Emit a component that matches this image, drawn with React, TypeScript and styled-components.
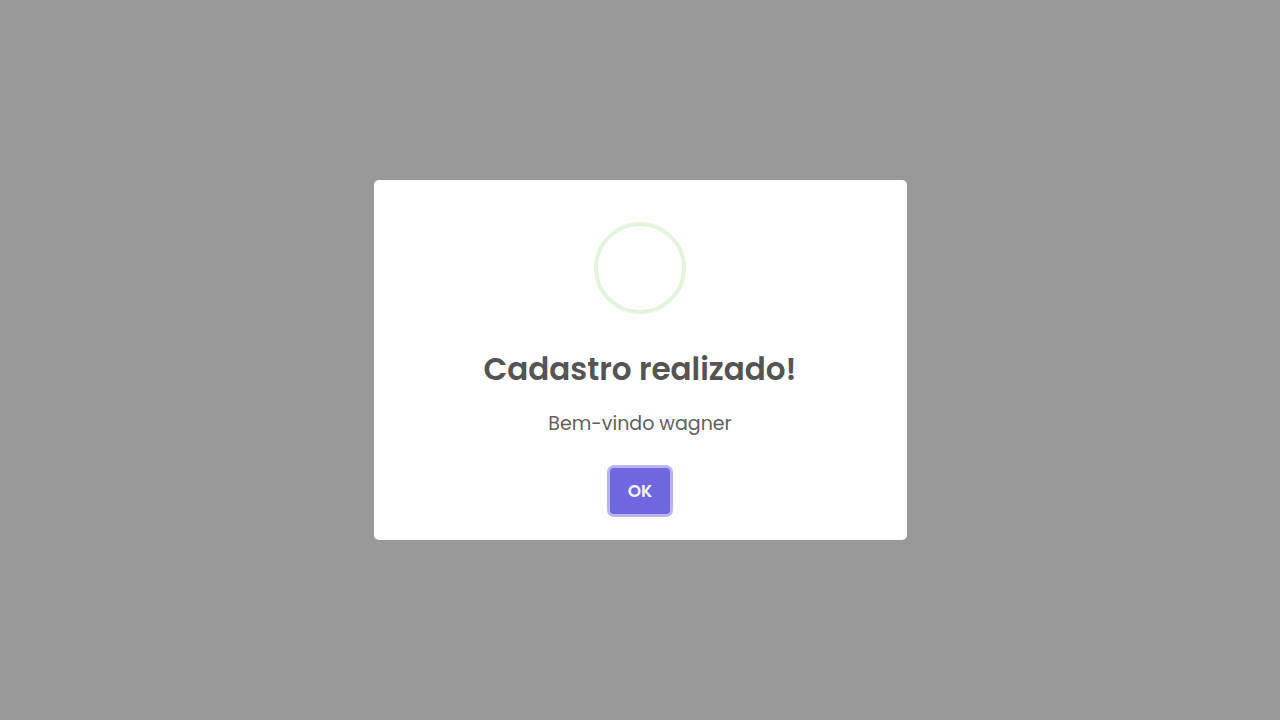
import React from "react";
import styled, { createGlobalStyle } from "styled-components";

const GlobalStyle = createGlobalStyle`
  *, *::before, *::after { box-sizing: border-box; }
  body {
    margin: 0;
    background: #999999;
    font-family: Poppins, Inter, "Liberation Sans", sans-serif;
  }
`;

const Backdrop = styled.main`
  min-height: 100vh;
  display: flex;
  align-items: center;
  justify-content: center;
  padding: 10px;
`;

const Dialog = styled.section`
  width: 100%;
  max-width: 533px;
  display: flex;
  flex-direction: column;
  align-items: center;
  padding: 42px 20px 26px;
  border-radius: 5px;
  background: #ffffff;
  text-align: center;
`;

const SuccessRing = styled.div`
  width: 92px;
  height: 92px;
  border: 4px solid #e3f4da;
  border-radius: 50%;
`;

const Title = styled.h2`
  margin: 32px 0 0;
  color: #545454;
  font-size: 31px;
  font-weight: 600;
  line-height: 46px;
`;

const Message = styled.p`
  margin: 18px 0 0;
  color: #606060;
  font-size: 19px;
  font-weight: 400;
  line-height: 28px;
`;

const ConfirmButton = styled.button`
  min-width: 60px;
  margin: 30px 0 0;
  padding: 11px 16px;
  border: 0;
  border-radius: 4px;
  background: #7066e0;
  box-shadow: 0 0 0 3px #b8b3f0;
  color: #f4f2fd;
  font-family: inherit;
  font-size: 17px;
  font-weight: 600;
  line-height: 24px;
  cursor: pointer;
`;

export default function App() {
  return (
    <>
      <GlobalStyle />
      <Backdrop>
        <Dialog role="dialog" aria-modal="true" aria-labelledby="dialog-title" aria-describedby="dialog-message">
          <SuccessRing aria-hidden="true" />
          <Title id="dialog-title">Cadastro realizado!</Title>
          <Message id="dialog-message">Bem-vindo wagner</Message>
          <ConfirmButton type="button">OK</ConfirmButton>
        </Dialog>
      </Backdrop>
    </>
  );
}
